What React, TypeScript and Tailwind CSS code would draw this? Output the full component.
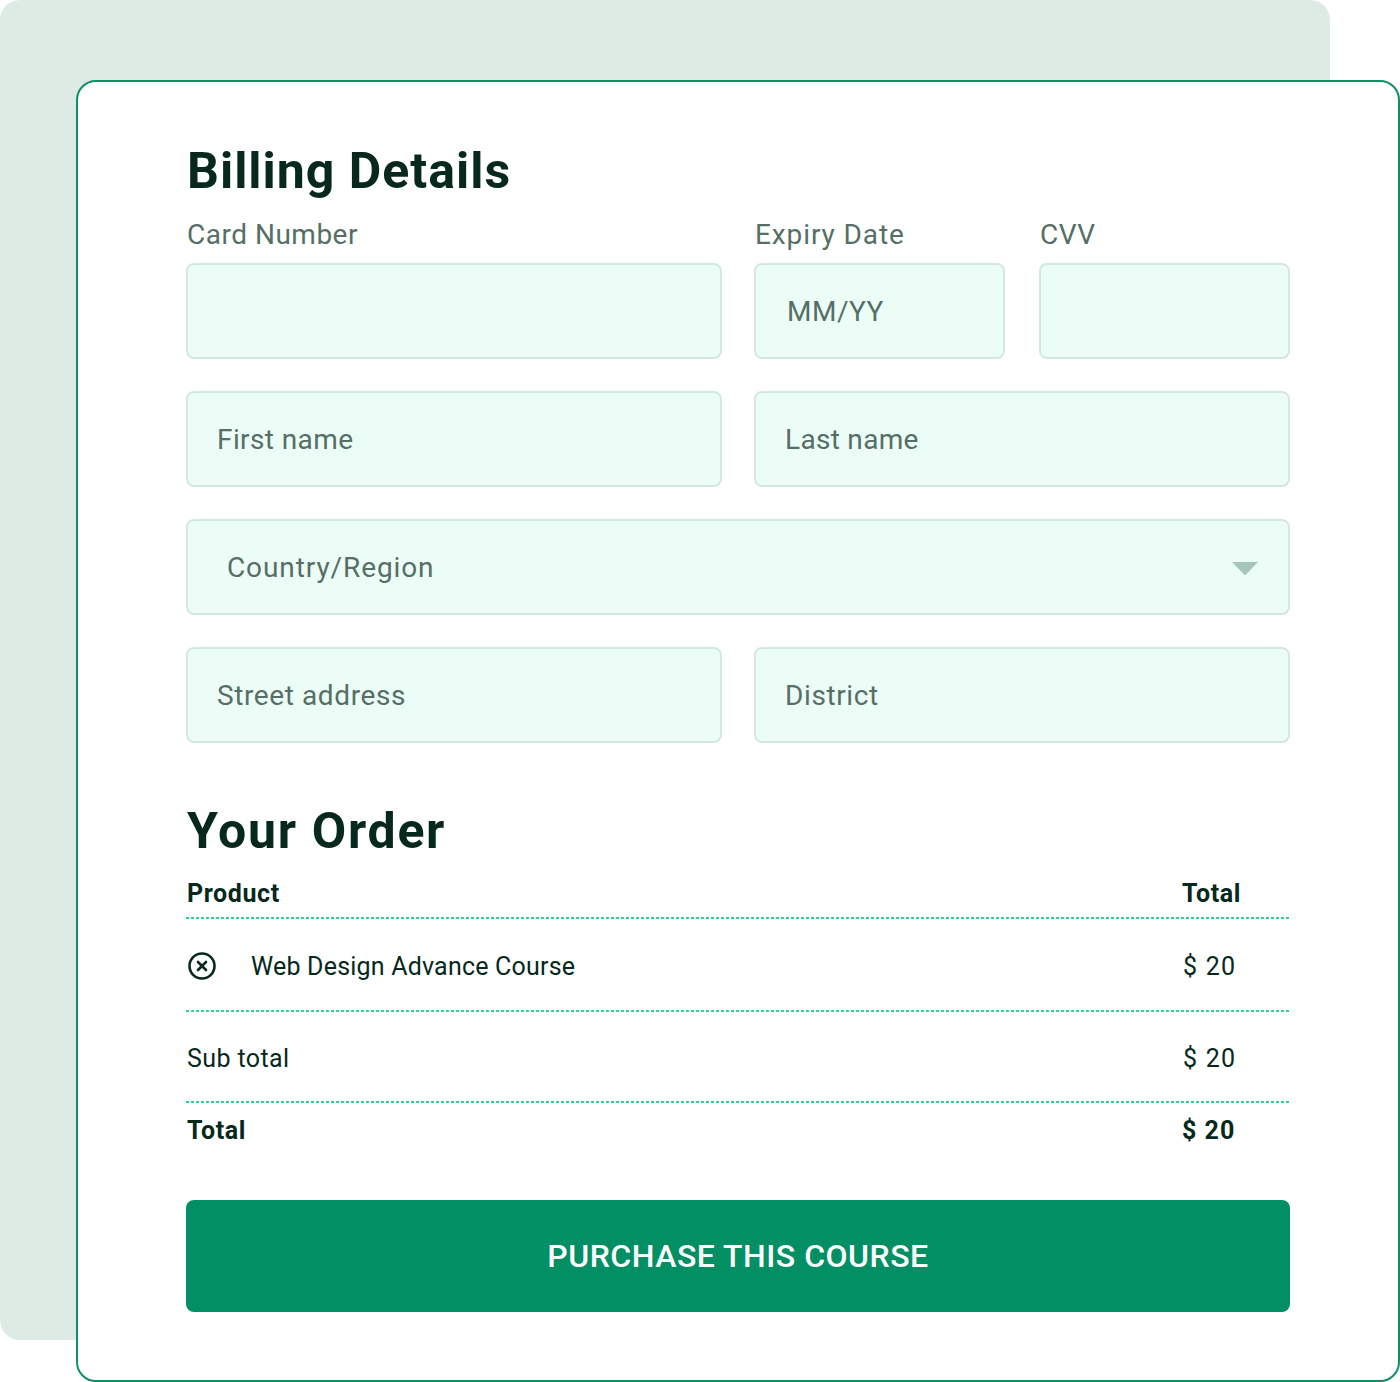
import React from 'react';

const Field = ({ text, className = 'tracking-[0.6px]' }: { text?: string; className?: string }) => (
  <div className={`flex h-24 items-center rounded-lg border-2 border-[#d2e9e1] bg-[#ecfdf7] pt-[2px] text-[28px] text-[#566f66] ${className}`}>
    {text}
  </div>
);

const Label = ({ text, className = 'tracking-[0.9px]' }: { text: string; className?: string }) => (
  <div className={`mb-[8px] pl-[1px] text-[28px] leading-[40px] text-[#566f66] ${className}`}>{text}</div>
);

const Row = ({ children, className = '' }: { children: React.ReactNode; className?: string }) => (
  <div className={`flex items-center justify-between pl-[1px] text-[25px] tracking-[0.6px] text-[#06281d] ${className}`}>
    {children}
  </div>
);

const Divider = ({ className = '' }: { className?: string }) => (
  <div className={`h-[2px] bg-[repeating-linear-gradient(90deg,#2fcf9f_0,#2fcf9f_3px,transparent_3px,transparent_5px)] ${className}`}></div>
);

export default function App() {
  return (
    <div className="relative h-[1382px] w-[1400px] overflow-hidden bg-white font-['Roboto',sans-serif]">
      {/* backdrop panel behind the card */}
      <div className="absolute left-0 top-0 h-[1340px] w-[1330px] rounded-[20px] bg-[#deebe5]"></div>

      <div className="relative ml-[76px] mt-[80px] h-[1302px] w-[1324px] rounded-[20px] border-2 border-[#0f8f66] bg-white px-[108px] pt-[57px]">
        <h2 className="pl-[1px] text-[50px] font-bold leading-[64px] tracking-[1px] text-[#06281d]">Billing Details</h2>

        <div className="mt-[12px] flex gap-[32px]">
          <div className="w-[536px]">
            <Label text="Card Number" className="tracking-[0.5px]" />
            <Field />
          </div>
          <div className="w-[251px]">
            <Label text="Expiry Date" />
            <Field text="MM/YY" className="pl-[31px] tracking-[0.5px]" />
          </div>
          <div className="ml-[2px] w-[251px]">
            <Label text="CVV" className="tracking-[0.6px]" />
            <Field />
          </div>
        </div>

        <div className="mt-[32px] grid grid-cols-2 gap-[32px]">
          <Field text="First name" className="pl-[29px] tracking-[0.4px]" />
          <Field text="Last name" className="pl-[29px] tracking-[0.3px]" />
        </div>

        <div className="relative mt-[32px]">
          <Field text="Country/Region" className="pl-[39px] tracking-[0.9px]" />
          <svg className="absolute right-[32px] top-[42px]" width="26" height="14" viewBox="0 0 26 14">
            <path d="M0 1h26L14 13.5q-1 .8-2 0z" fill="#a6c4ba" />
          </svg>
        </div>

        <div className="mt-[32px] grid grid-cols-2 gap-[32px]">
          <Field text="Street address" className="pl-[29px] tracking-[0.6px]" />
          <Field text="District" className="pl-[29px] tracking-[0.6px]" />
        </div>

        <h2 className="mt-[56px] pl-[1px] text-[50px] font-bold leading-[64px] tracking-[1.7px] text-[#06281d]">Your Order</h2>

        <Row className="mt-[13px] h-[36px] font-bold">
          <span>Product</span>
          <span className="w-[108px]">Total</span>
        </Row>
        <Divider className="mt-[5px]" />
        <Row className="h-[91px] pt-[5px]">
          <span className="flex items-center">
            <svg width="30" height="30" viewBox="0 0 30 30" fill="none" stroke="#06281d" strokeWidth="2.6" strokeLinecap="round" className="-mt-[3px]">
              <circle cx="15" cy="15" r="12.5" />
              <path d="M11 11l8 8M19 11l-8 8" />
            </svg>
            <span className="ml-[34px] tracking-[0.2px]">Web Design Advance Course</span>
          </span>
          <span className="w-[107px] tracking-[1.2px]">$ 20</span>
        </Row>
        <Divider />
        <Row className="h-[89px] pt-[5px]">
          <span className="tracking-[0.4px]">Sub total</span>
          <span className="w-[107px] tracking-[1.2px]">$ 20</span>
        </Row>
        <Divider />
        <Row className="h-[54px] pt-[2px] font-bold">
          <span>Total</span>
          <span className="w-[108px] tracking-[1px]">$ 20</span>
        </Row>

        <button className="mt-[43px] flex h-[112px] w-full items-center justify-center rounded-lg bg-[#028f63] text-[32px] font-medium tracking-[0.5px] text-white">
          PURCHASE THIS COURSE
        </button>
      </div>
    </div>
  );
}
